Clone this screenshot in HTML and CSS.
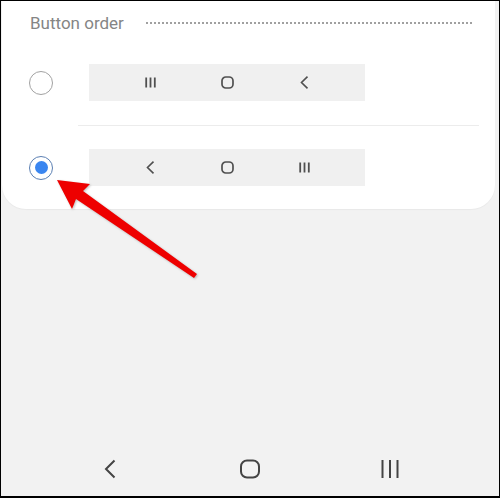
FILE: index.html
```html
<!DOCTYPE html>
<html lang="en">
<head>
    <meta charset="UTF-8">
    <meta name="viewport" content="width=device-width, initial-scale=1.0">
    <title>Button order</title>
    <link rel="stylesheet" href="styles.css">
</head>
<body>
    <div class="screen">
        <div class="card">
            <div class="header">
                <span class="title">Button order</span>
                <span class="dots"></span>
            </div>

            <div class="option">
                <span class="radio"></span>
                <div class="preview">
                    <svg class="icon" width="13" height="13" viewBox="0 0 13 13"><path d="M2.2 1.5v10M6.5 1.5v10M10.8 1.5v10" stroke="#505050" stroke-width="1.8" fill="none"/></svg>
                    <svg class="icon" width="13" height="13" viewBox="0 0 13 13"><rect x="1" y="1" width="11" height="11" rx="3.8" stroke="#505050" stroke-width="1.7" fill="none"/></svg>
                    <svg class="icon" width="13" height="13" viewBox="0 0 13 13"><path d="M9.5 0.7L3.5 6.5l6 5.8" stroke="#505050" stroke-width="1.6" fill="none"/></svg>
                </div>
            </div>

            <div class="divider"></div>

            <div class="option">
                <span class="radio checked"></span>
                <div class="preview">
                    <svg class="icon" width="13" height="13" viewBox="0 0 13 13"><path d="M9.5 0.7L3.5 6.5l6 5.8" stroke="#505050" stroke-width="1.6" fill="none"/></svg>
                    <svg class="icon" width="13" height="13" viewBox="0 0 13 13"><rect x="1" y="1" width="11" height="11" rx="3.8" stroke="#505050" stroke-width="1.7" fill="none"/></svg>
                    <svg class="icon" width="13" height="13" viewBox="0 0 13 13"><path d="M2.2 1.5v10M6.5 1.5v10M10.8 1.5v10" stroke="#505050" stroke-width="1.8" fill="none"/></svg>
                </div>
            </div>
        </div>

        <div class="spacer"></div>

        <div class="navbar">
            <svg width="20" height="20" viewBox="0 0 20 20"><path d="M14.5 1.5L6 10l8.5 8.5" stroke="#444" stroke-width="2" fill="none"/></svg>
            <svg width="20" height="20" viewBox="0 0 20 20"><rect x="1" y="1.5" width="18" height="17" rx="6" stroke="#444" stroke-width="2" fill="none"/></svg>
            <svg width="20" height="20" viewBox="0 0 20 20"><path d="M2.5 1v18M10 1v18M17.5 1v18" stroke="#444" stroke-width="2" fill="none"/></svg>
        </div>

        <svg class="arrow" width="500" height="498" viewBox="0 0 500 498">
            <polygon points="57,180 90,184 83,191 197,274 194,278 76,199 72,209" fill="#ee0000"/>
        </svg>
    </div>
</body>
</html>
```

FILE: styles.css
```css
* {
    margin: 0;
    padding: 0;
    box-sizing: border-box;
}

body {
    font-family: Roboto, 'Noto Sans', Arial, sans-serif;
    background: #000;
}

.screen {
    position: relative;
    width: 500px;
    height: 498px;
    border: 1px solid #000;
    border-bottom-width: 2px;
    background: #f2f2f2;
    display: flex;
    flex-direction: column;
    overflow: hidden;
}

.card {
    background: #fff;
    margin-right: 4px;
    margin-left: 1px;
    border-radius: 0 0 24px 24px;
    padding: 11px 0 23px 0;
    box-shadow: 0 1px 1px rgba(0, 0, 0, 0.04);
}

.header {
    display: flex;
    align-items: center;
    height: 22px;
    padding-left: 28px;
    padding-right: 22px;
}

.title {
    font-size: 17px;
    color: #858585;
    white-space: nowrap;
}

.dots {
    flex: 1;
    margin-left: 21px;
    height: 2px;
    background-image: radial-gradient(circle, #a0a0a0 0.8px, transparent 1.1px);
    background-size: 4px 2px;
    background-repeat: repeat-x;
}

.option {
    display: flex;
    align-items: center;
    padding-left: 27px;
}

.header + .option {
    margin-top: 30px;
}

.radio {
    width: 24px;
    height: 24px;
    border-radius: 50%;
    border: 1.5px solid #a2a2a2;
    display: flex;
    align-items: center;
    justify-content: center;
    margin-right: 36px;
}

.radio.checked {
    border-color: #5b7fb3;
}

.radio.checked::after {
    content: "";
    width: 13px;
    height: 13px;
    border-radius: 50%;
    background: #3a86f0;
}

.preview {
    width: 276px;
    height: 37px;
    background: #f0f0f0;
    display: flex;
    align-items: center;
    justify-content: center;
    gap: 64px;
}

.icon {
    display: block;
}

.divider {
    height: 1px;
    background: #ececec;
    margin: 24px 16px 23px 76px;
}

.spacer {
    flex: 1;
}

.navbar {
    height: 50px;
    margin-bottom: 2px;
    display: flex;
    align-items: center;
    justify-content: center;
    gap: 120px;
}

.navbar svg {
    display: block;
}

.arrow {
    position: absolute;
    left: -1px;
    top: -1px;
    filter: drop-shadow(1px 1px 1px rgba(0, 0, 0, 0.25));
    pointer-events: none;
}
```
